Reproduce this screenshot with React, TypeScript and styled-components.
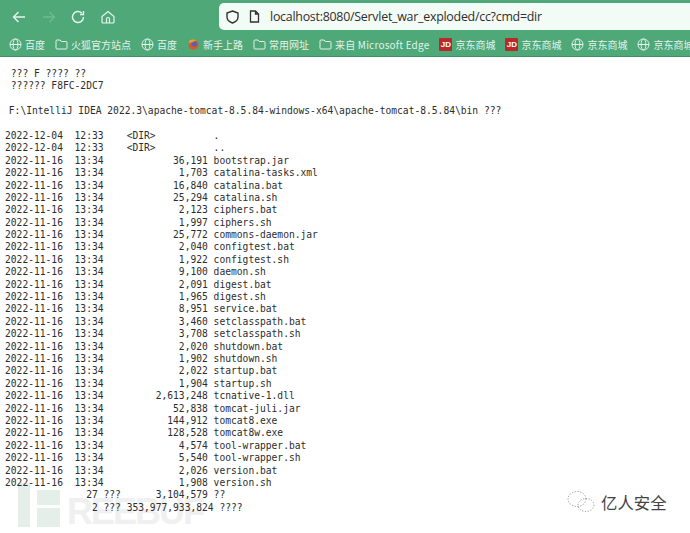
import React from "react";
import styled, { createGlobalStyle } from "styled-components";

const Global = createGlobalStyle`
  html, body { margin: 0; padding: 0; background: #fff; }
  body { width: 690px; height: 533px; overflow: hidden; }
`;
const Page = styled.div`
  position: relative; width: 690px; height: 533px; overflow: hidden; background: #fff;
  display: flex; flex-direction: column;
`;
const Chrome = styled.header`
  height: 56px; background: #4ea878; border-bottom: 1px solid #3f8f65; flex: none;
  display: flex; flex-direction: column;
`;
const NavRow = styled.div`
  height: 33px; display: flex; align-items: flex-start; padding-left: 10px;
`;
const NavIcons = styled.div`
  width: 209px; height: 33px; display: flex; align-items: center; gap: 11.5px; flex: none;
`;
const NavButton = styled.span<{ $dim?: boolean }>`
  width: 18px; height: 18px; display: flex; align-items: center; justify-content: center;
  color: ${(p) => (p.$dim ? "#6fbb93" : "#e6f5ed")};
`;
const AddressBar = styled.div`
  flex: 1; height: 27px; margin-top: 3px; background: #f3fbf7; border-radius: 5px 0 0 5px;
  display: flex; align-items: center; padding-left: 7px; gap: 10px; color: #333;
  font: 12.4px "Open Sans", "Liberation Sans", sans-serif;
`;
const Url = styled.span`
  letter-spacing: -0.25px; color: #2e2e2e; white-space: nowrap;
`;
const BookmarkRow = styled.nav`
  height: 22px; display: flex; align-items: center; padding-left: 9px; gap: 10px; white-space: nowrap;
`;
const Bookmark = styled.span<{ $latin?: boolean }>`
  display: flex; align-items: center; gap: 3px; flex: none; color: #e3f2ea;
  font: 10px "Noto Sans CJK SC", "Noto Sans", sans-serif;
  letter-spacing: ${(p) => (p.$latin ? "0.2px" : "0")};
`;
const JdBadge = styled.span`
  width: 13px; height: 13px; background: #b8282c; color: #fff; border-radius: 1px; display: flex;
  align-items: center; justify-content: center; font: bold 8px "Liberation Sans", sans-serif;
`;
const Listing = styled.pre`
  margin: 0; padding: 11px 0 0 5px; color: #2d2d2d; position: relative; z-index: 1;
  font: 9.63px/12.39px "DejaVu Sans Mono", monospace;
`;
const PathLine = styled.span`
  margin-left: -2px;
`;
const Watermark = styled.div`
  position: absolute; left: 18px; top: 483px; width: 200px; height: 44px; display: flex; align-items: flex-end; gap: 7px;
`;
const WatermarkText = styled.span`
  font: bold 36px/30px "Liberation Sans", sans-serif; letter-spacing: -2px; color: #f0f0f0;
`;
const Wechat = styled.div`
  position: absolute; left: 567px; top: 490px; display: flex; align-items: center; gap: 6px; color: #444;
  font: 16.4px "Noto Sans CJK SC", sans-serif;
`;

const Globe = () => (
  <svg width="13" height="13" viewBox="0 0 13 13" fill="none" stroke="currentColor" strokeWidth="1">
    <circle cx="6.5" cy="6.5" r="5.5" />
    <ellipse cx="6.5" cy="6.5" rx="2.4" ry="5.5" />
    <path d="M1 6.5h11" />
  </svg>
);
const Folder = () => (
  <svg width="13" height="13" viewBox="0 0 13 13" fill="none" stroke="currentColor" strokeWidth="1">
    <path d="M1 3a1 1 0 0 1 1-1h3l1.3 1.5H11a1 1 0 0 1 1 1V10a1 1 0 0 1-1 1H2a1 1 0 0 1-1-1z" />
  </svg>
);
const Fox = () => (
  <svg width="13" height="13" viewBox="0 0 13 13">
    <circle cx="6.5" cy="6.8" r="5" fill="#d9582b" />
    <circle cx="7.3" cy="6" r="2.6" fill="#5b5fb0" />
    <path d="M2 3c2-2 6-2 8 0-2-.5-3.500 0-4.500 1.500C4 4 3 5 2.800 6.500z" fill="#f0a030" />
  </svg>
);

const header = ` ??? F ???? ??
 ?????? F8FC-2DC7

`;
const pathLine = ` F:\\IntelliJ IDEA 2022.3\\apache-tomcat-8.5.84-windows-x64\\apache-tomcat-8.5.84\\bin ???`;
const rows = `

2022-12-04  12:33    <DIR>          .
2022-12-04  12:33    <DIR>          ..
2022-11-16  13:34            36,191 bootstrap.jar
2022-11-16  13:34             1,703 catalina-tasks.xml
2022-11-16  13:34            16,840 catalina.bat
2022-11-16  13:34            25,294 catalina.sh
2022-11-16  13:34             2,123 ciphers.bat
2022-11-16  13:34             1,997 ciphers.sh
2022-11-16  13:34            25,772 commons-daemon.jar
2022-11-16  13:34             2,040 configtest.bat
2022-11-16  13:34             1,922 configtest.sh
2022-11-16  13:34             9,100 daemon.sh
2022-11-16  13:34             2,091 digest.bat
2022-11-16  13:34             1,965 digest.sh
2022-11-16  13:34             8,951 service.bat
2022-11-16  13:34             3,460 setclasspath.bat
2022-11-16  13:34             3,708 setclasspath.sh
2022-11-16  13:34             2,020 shutdown.bat
2022-11-16  13:34             1,902 shutdown.sh
2022-11-16  13:34             2,022 startup.bat
2022-11-16  13:34             1,904 startup.sh
2022-11-16  13:34         2,613,248 tcnative-1.dll
2022-11-16  13:34            52,838 tomcat-juli.jar
2022-11-16  13:34           144,912 tomcat8.exe
2022-11-16  13:34           128,528 tomcat8w.exe
2022-11-16  13:34             4,574 tool-wrapper.bat
2022-11-16  13:34             5,540 tool-wrapper.sh
2022-11-16  13:34             2,026 version.bat
2022-11-16  13:34             1,908 version.sh
              27 ???      3,104,579 ??
               2 ??? 353,977,933,824 ????`;

const marks: { name: string; icon: "globe" | "folder" | "fox" | "jd"; latin?: boolean }[] = [
  { name: "百度", icon: "globe" },
  { name: "火狐官方站点", icon: "folder" },
  { name: "百度", icon: "globe" },
  { name: "新手上路", icon: "fox" },
  { name: "常用网址", icon: "folder" },
  { name: "来自 Microsoft Edge", icon: "folder", latin: true },
  { name: "京东商城", icon: "jd" },
  { name: "京东商城", icon: "jd" },
  { name: "京东商城", icon: "globe" },
  { name: "京东商城", icon: "globe" },
];

export default function App() {
  return (
    <Page>
      <Global />
      <Chrome>
        <NavRow>
          <NavIcons>
            <NavButton>
              <svg width="14" height="14" viewBox="0 0 14 14" fill="none" stroke="currentColor" strokeWidth="1.4"><path d="M13 7H1.500M6.500 2 1.500 7l5 5" /></svg>
            </NavButton>
            <NavButton $dim>
              <svg width="14" height="14" viewBox="0 0 14 14" fill="none" stroke="currentColor" strokeWidth="1.4"><path d="M1 7h11.500M7.500 2l5 5-5 5" /></svg>
            </NavButton>
            <NavButton>
              <svg width="14" height="14" viewBox="0 0 14 14" fill="none" stroke="currentColor" strokeWidth="1.4"><path d="M12.500 7A5.500 5.500 0 1 1 10.800 3M12.500 1v3.500H9" /></svg>
            </NavButton>
            <NavButton>
              <svg width="14" height="14" viewBox="0 0 14 14" fill="none" stroke="currentColor" strokeWidth="1.2"><path d="M1 6.500 7 1.500l6 5V12a1 1 0 0 1-1 1H2a1 1 0 0 1-1-1zM5.500 13V9a1.500 1.500 0 0 1 3 0v4" /></svg>
            </NavButton>
          </NavIcons>
          <AddressBar>
            <svg width="13" height="14" viewBox="0 0 13 14" fill="none" stroke="#333" strokeWidth="1.4"><path d="M6.500 1 12 3v4c0 3-2.500 5-5.500 6C3.500 12 1 10 1 7V3z" /></svg>
            <svg width="11" height="13" viewBox="0 0 11 13" fill="none" stroke="#333" strokeWidth="1.3"><path d="M1.500 1h5l3 3v8h-8zM6.500 1v3h3" /></svg>
            <Url>localhost:8080/Servlet_war_exploded/cc?cmd=dir</Url>
          </AddressBar>
        </NavRow>
        <BookmarkRow>
          {marks.map((m, i) => (
            <Bookmark key={i} $latin={m.latin}>
              {m.icon === "globe" && <Globe />}
              {m.icon === "folder" && <Folder />}
              {m.icon === "fox" && <Fox />}
              {m.icon === "jd" && <JdBadge>JD</JdBadge>}
              {m.name}
            </Bookmark>
          ))}
        </BookmarkRow>
      </Chrome>
      <Listing>{header}<PathLine>{pathLine}</PathLine>{rows}</Listing>
      <Watermark>
        <svg width="42" height="44" viewBox="0 0 42 44" fill="#e4efea"><path d="M0 0h12v44H0zM19 7h23v15H19zM19 25h23v19H19z" /></svg>
        <WatermarkText>REEBUF</WatermarkText>
      </Watermark>
      <Wechat>
        <svg width="28" height="24" viewBox="0 0 28 24" fill="none" stroke="#8a8a8a" strokeWidth="0.9" strokeDasharray="1.200 1.600">
          <ellipse cx="10" cy="9" rx="9" ry="7.500" />
          <ellipse cx="19" cy="15" rx="8" ry="6.500" />
        </svg>
        <span>亿人安全</span>
      </Wechat>
    </Page>
  );
}
